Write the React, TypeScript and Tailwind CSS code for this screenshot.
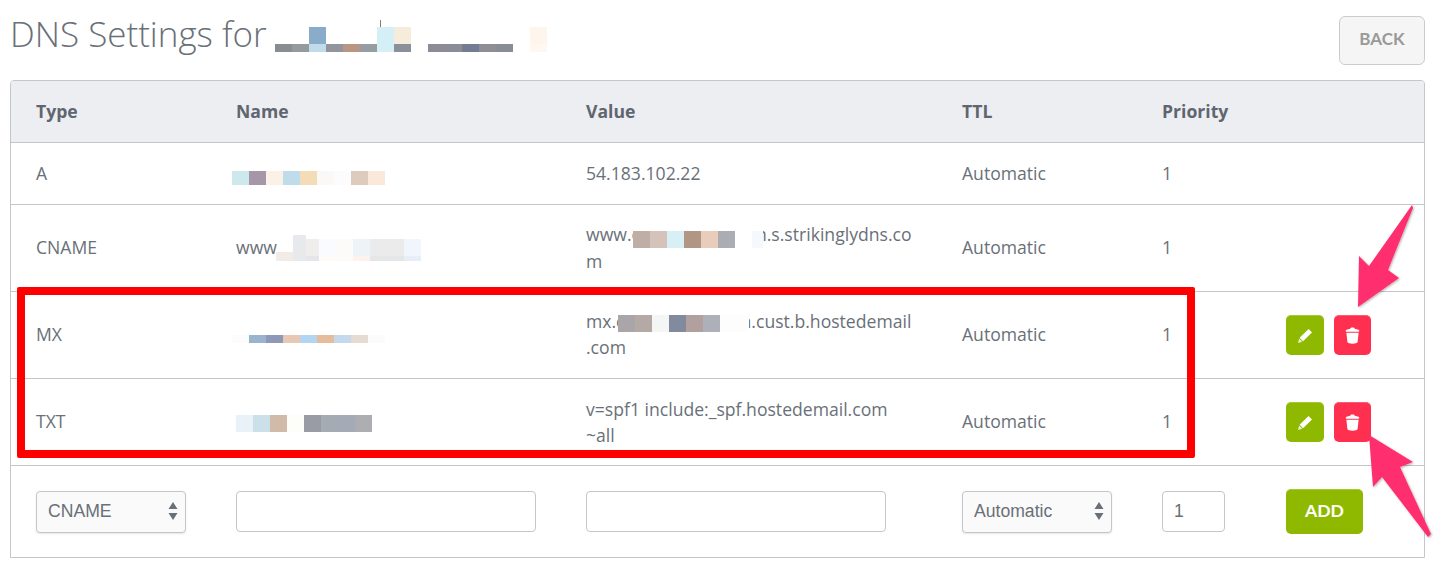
import React from "react";

type Block = string | null;

// mosaic used for the blurred out parts of the screenshot
function Pixels({
  rows,
  size = 17,
  sizes,
  className = "",
}: {
  rows: { h: number; colors: Block[] }[];
  size?: number;
  sizes?: number[];
  className?: string;
}) {
  return (
    <span className={`inline-flex flex-col align-top ${className}`}>
      {rows.map((row, i) => (
        <span key={i} className="flex" style={{ height: row.h }}>
          {row.colors.map((c, j) => (
            <span
              key={j}
              className="block h-full"
              style={{ width: sizes ? sizes[j] : size, backgroundColor: c ?? "transparent" }}
            />
          ))}
        </span>
      ))}
    </span>
  );
}

function UpDownArrows() {
  return (
    <svg
      width="10"
      height="20"
      viewBox="0 0 10 20"
      className="pointer-events-none absolute right-[8px] top-[10px] text-[#697078]"
    >
      <path d="M5 1 L9.5 8 H0.5 Z M0.5 12 H9.5 L5 19 Z" fill="currentColor" />
    </svg>
  );
}

function SelectBox({ value }: { value: string }) {
  return (
    <div className="relative h-[42px] w-[150px]">
      <select
        defaultValue={value}
        className="h-full w-full appearance-none rounded-[4px] border border-[#c5c6cd] bg-[#fafafa] pl-[11px] font-['Liberation_Sans',sans-serif] text-[17.6px] leading-none text-[#697078] shadow-[0_1px_2px_rgba(0,0,0,0.1)]"
      >
        <option>{value}</option>
      </select>
      <UpDownArrows />
    </div>
  );
}

function RowActions() {
  return (
    <div className="mt-[2px] flex gap-[10px]">
      <button className="flex h-[40px] w-[38px] items-center justify-center rounded-[5px] border-t border-[#a5c932] bg-[#8fb900]">
        <svg width="16" height="16" viewBox="0 0 16 16">
          <path d="M11.6 1 L15 4.4 L6 13.2 L2.6 9.8 Z" fill="#fff" />
          <path d="M2.1 10.6 L5.3 13.8 L1 15 Z" fill="#e8f2c0" />
        </svg>
      </button>
      <button className="flex h-[40px] w-[37px] items-center justify-center rounded-[5px] border-t border-[#ff5a70] bg-[#ff304f]">
        <svg width="15" height="17" viewBox="0 0 15 17">
          <path d="M5.2 1.8 C5.4 0.2 9.6 0.2 9.8 1.8 L13.4 2.8 C14.6 3.3 14.6 4.8 13.4 4.8 H1.6 C0.4 4.8 0.4 3.3 1.6 2.8 Z" fill="#fff" />
          <path d="M1.4 5.8 H13.6 L12.6 15 C12.4 17.2 2.6 17.2 2.4 15 Z" fill="#fff" />
        </svg>
      </button>
    </div>
  );
}

function Row({
  height,
  className = "pb-[2px]",
  children,
}: {
  height: string;
  className?: string;
  children: React.ReactNode;
}) {
  return (
    <div
      className={`grid grid-cols-[200px_350px_376px_200px_124px_1fr] items-center border-t border-[#c5c6cd] px-[25px] ${height} ${className}`}
    >
      {children}
    </div>
  );
}

export default function App() {
  return (
    <div className="relative h-[573px] w-[1438px] overflow-hidden bg-white font-['Open_Sans',sans-serif] text-[17.6px] leading-[26px] text-[#697078]">
      {/* Title */}
      <div className="flex h-[80px] items-start justify-between pl-[10px] pr-[13px]">
        <div className="flex items-start pt-[9px]">
          <h1 className="text-[35px] leading-[50px] font-light text-[#697078]">
            DNS Settings for
          </h1>
          <span className="ml-[8px] mt-[18px] flex items-start gap-[17px]">
            <span className="relative">
              <span className="absolute left-[105px] top-[-7px] h-[7px] w-[1px] bg-[#8a7a70]" />
              <Pixels
                rows={[
                  { h: 17, colors: [null, null, "#8aaccb", null, null, null, "#d4eff6", "#f5ecdc"] },
                  { h: 8, colors: ["#8a8c94", "#959a9f", "#c2dbea", "#92969c", "#bb9584", "#969da2", "#d4eff6", "#8a9099"] },
                ]}
              />
            </span>
            <Pixels
              rows={[
                { h: 17, colors: [null, null, null, null, null] },
                { h: 8, colors: ["#8b8c96", "#8b8c96", "#727d93", "#8d8f95", "#888d95"] },
              ]}
            />
            <Pixels
              rows={[
                { h: 17, colors: ["#fef5ec"] },
                { h: 8, colors: ["#fef8f1"] },
              ]}
            />
          </span>
        </div>
        <button className="mt-[16px] h-[49px] w-[86px] rounded-[6px] border border-[#cccccc] bg-[#f5f5f5] pb-[3px] font-['Lato',sans-serif] text-[17px] font-bold text-[#999999]">
          BACK
        </button>
      </div>

      {/* Table */}
      <div className="ml-[10px] w-[1415px] overflow-hidden rounded-t-[4px] border border-[#c5c6cd]">
        <div className="grid h-[61px] grid-cols-[200px_350px_376px_200px_124px_1fr] items-center bg-[#edeef2] px-[25px] pb-[2px] font-bold text-[#5f6670]">
          <div>Type</div>
          <div>Name</div>
          <div>Value</div>
          <div>TTL</div>
          <div>Priority</div>
        </div>

        <Row height="h-[62px]">
          <div>A</div>
          <div className="-ml-[4px] flex pt-[11px]">
            <Pixels
              rows={[
                {
                  h: 14,
                  colors: ["#cde9ee", "#a597a8", "#fbf1e6", "#bfdceb", "#f5dcb9", "#fbf9f7", "#fdfcfc", "#decbbe", "#fce8da"],
                },
              ]}
            />
          </div>
          <div>54.183.102.22</div>
          <div>Automatic</div>
          <div>1</div>
        </Row>

        <Row height="h-[87px]">
          <div>CNAME</div>
          <div className="flex items-center">
            <span className="w-[40px]">www</span>
            <Pixels
              sizes={[17, 13, 13, 17, 17, 17, 17, 17, 17]}
              rows={[
                { h: 4, colors: [null, "#e8e9ec", null, null, null, null, null, null, null] },
                { h: 13, colors: [null, "#e8e9ec", "#efeeec", "#fafbfe", "#fdfbfa", "#eef3f7", "#ebebec", "#ebebec", "#f0f6fc"] },
                { h: 4, colors: ["#f2ebe6", "#e8e9ec", "#efeeec", "#fafbfe", "#fdfbfa", "#eef3f7", "#ebebec", "#ebebec", "#f0f6fc"] },
                { h: 5, colors: ["#f2ebe6", "#e8e9ec", "#e5e6e9", "#fefbf9", "#fdfbfa", "#fdf3ec", "#e5e6e7", "#e5e6e7", "#e8eef8"] },
              ]}
              className="mt-[2px]"
            />
          </div>
          <div className="whitespace-nowrap">
            www.c
            <Pixels
              className="relative z-10 mt-[10px] -ml-[7px]"
              sizes={[17, 17, 17, 17, 17, 17, 17, 11]}
              rows={[
                {
                  h: 17,
                  colors: ["#bfaea6", "#d5c3ba", "#d8eff6", "#b19585", "#e9ccba", "#abadb4", null, "#f5f9fd"],
                },
              ]}
            />
            <span className="-ml-[7px]">n.s.strikinglydns.co</span>
            <br />m
          </div>
          <div>Automatic</div>
          <div>1</div>
        </Row>

        <Row height="h-[87px]">
          <div>MX</div>
          <div className="-ml-[4px] flex pt-[9px]">
            <Pixels
              rows={[
                {
                  h: 8,
                  colors: ["#fbfcfe", "#9ab4cc", "#8e99b7", "#e7c8b4", "#b2d6f2", "#e6bd9b", "#c4d9ec", "#e5dbd2", "#fbfbfb"],
                },
              ]}
            />
          </div>
          <div className="whitespace-nowrap">
            mx.c
            <Pixels
              className="relative z-10 mt-[7px] -ml-[7px]"
              sizes={[17, 17, 17, 17, 17, 17, 29]}
              rows={[
                {
                  h: 17,
                  colors: ["#aaa5a9", "#b5a9a6", "#f4f6f6", "#828a9d", "#b2a09e", "#adb0b9", "#fdfdfd"],
                },
              ]}
            />
            <span className="-ml-[8px]">n.cust.b.hostedemail</span>
            <br />
            .com
          </div>
          <div>Automatic</div>
          <div>1</div>
          <RowActions />
        </Row>

        <Row height="h-[87px]">
          <div>TXT</div>
          <div className="flex pt-[4px]">
            <Pixels
              rows={[
                {
                  h: 17,
                  colors: ["#e9f2f8", "#cce0e9", "#d2baa9", "#fdfdfa", "#999ca4", "#a4abb2", "#a5aab7", "#acaeb2"],
                },
              ]}
            />
          </div>
          <div className="whitespace-nowrap pt-[2px]">
            v=spf1 include:_spf.hostedemail.com
            <br />
            ~all
          </div>
          <div>Automatic</div>
          <div>1</div>
          <RowActions />
        </Row>

        <Row height="h-[92px]" className="">
          <SelectBox value="CNAME" />
          <input className="h-[41px] w-[300px] rounded-[4px] border border-[#c5c6cd] bg-white" />
          <input className="h-[41px] w-[300px] rounded-[4px] border border-[#c5c6cd] bg-white" />
          <SelectBox value="Automatic" />
          <input
            defaultValue="1"
            className="h-[41px] w-[63px] rounded-[4px] border border-[#c5c6cd] bg-white px-[11px] font-['Liberation_Sans',sans-serif] text-[17.6px] text-[#697078]"
          />
          <button className="h-[45px] w-[77px] rounded-[5px] border-t border-[#a5c932] bg-[#8fb900] pb-[2px] font-['Lato',sans-serif] text-[17.6px] font-bold text-white">
            ADD
          </button>
        </Row>
      </div>

      {/* Red annotation box */}
      <div className="pointer-events-none absolute left-[17px] top-[287px] h-[171px] w-[1178px] rounded-[2px] border-8 border-[#ff0000]" />

      {/* Pink arrows */}
      <svg
        className="pointer-events-none absolute left-0 top-0 h-[573px] w-[1438px]"
        viewBox="0 0 1438 573"
      >
        <defs>
          <filter id="arrow-shadow" x="-20%" y="-20%" width="140%" height="140%">
            <feDropShadow dx="1" dy="1" stdDeviation="1" floodColor="#000" floodOpacity="0.3" />
          </filter>
        </defs>
        <g fill="#ff2e6e" filter="url(#arrow-shadow)">
          <path d="M1412 205 L1413 208 L1388 270 L1399 278 L1358 307 L1359 256 L1369 266 Z" />
          <path d="M1369 435 L1413 462 L1400 467 L1431 534 L1428 537 L1382 477 L1373 487 Z" />
        </g>
      </svg>
    </div>
  );
}
